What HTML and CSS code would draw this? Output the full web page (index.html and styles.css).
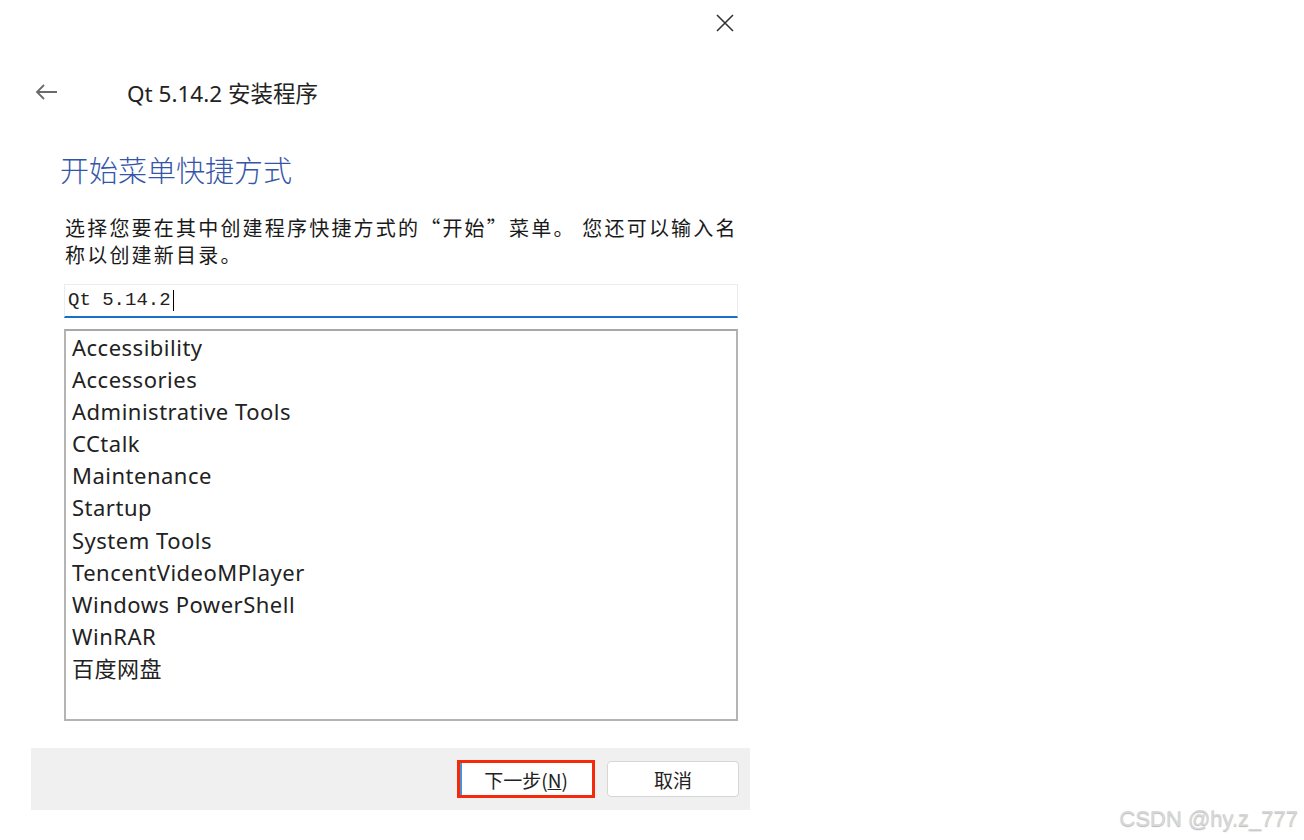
FILE: index.html
```html
<!DOCTYPE html>
<html lang="zh-CN">

<head>
    <meta charset="UTF-8">
    <meta name="viewport" content="width=device-width, initial-scale=1.0">
    <title>Qt 5.14.2 安装程序</title>
    <link rel="stylesheet" href="styles.css">
</head>

<body>
    <div class="window">
        <!-- Title bar with close button -->
        <div class="titlebar">
            <button class="close" title="关闭">
                <svg width="18" height="18" viewBox="0 0 18 18">
                    <path d="M1 1 L17 17 M17 1 L1 17" stroke="#333" stroke-width="1.6" fill="none" />
                </svg>
            </button>
        </div>

        <div class="header">
            <button class="back" title="返回">
                <svg width="24" height="18" viewBox="0 0 24 18">
                    <path d="M23 9 H3 M10 2 L3 9 L10 16" stroke="#6a6a6a" stroke-width="1.8" fill="none" />
                </svg>
            </button>
            <span class="app-title">Qt 5.14.2 安装程序</span>
        </div>

        <div class="content">
            <h1 class="page-title">开始菜单快捷方式</h1>
            <p class="desc">选择您要在其中创建程序快捷方式的“开始”菜单。 您还可以输入名称以创建新目录。</p>

            <div class="folder-input">Qt 5.14.2<span class="caret"></span></div>

            <ul class="folder-list">
                <li>Accessibility</li>
                <li>Accessories</li>
                <li>Administrative Tools</li>
                <li>CCtalk</li>
                <li>Maintenance</li>
                <li>Startup</li>
                <li>System Tools</li>
                <li>TencentVideoMPlayer</li>
                <li>Windows PowerShell</li>
                <li>WinRAR</li>
                <li>百度网盘</li>
            </ul>
        </div>

        <div class="footer">
            <button class="btn btn-next">下一步(<u>N</u>)</button>
            <button class="btn">取消</button>
        </div>
    </div>

    <div class="watermark">CSDN @hy.z_777</div>
</body>

</html>
```

FILE: styles.css
```css
* {
    margin: 0;
    padding: 0;
    box-sizing: border-box;
}

body {
    background: #fff;
    color: #222;
    font-family: 'Noto Sans', 'Noto Sans CJK SC', sans-serif;
    width: 1304px;
    height: 840px;
    position: relative;
    overflow: hidden;
}

.window {
    margin-left: 31px;
    width: 719px;
    background: #fff;
}

.titlebar {
    height: 45px;
    display: flex;
    justify-content: flex-end;
    align-items: flex-start;
}

.close {
    width: 52px;
    height: 45px;
    border: none;
    background: none;
    display: flex;
    align-items: center;
    justify-content: center;
    margin-right: -1px;
}

.header {
    display: flex;
    align-items: center;
    height: 48px;
    margin-top: 23px;
}

.back {
    width: 32px;
    border: none;
    background: none;
    display: flex;
    align-items: center;
    margin-left: 3px;
}

.app-title {
    margin-left: 61px;
    font-size: 22.5px;
    color: #222;
}

.content {
    padding: 0 12px 0 33px;
}

.page-title {
    margin-top: 33px;
    margin-left: -4px;
    font-family: 'Noto Sans CJK SC', serif;
    font-weight: 300;
    font-size: 29px;
    line-height: 40px;
    color: #3556a8;
}

.desc {
    margin-top: 25px;
    margin-left: 1px;
    font-family: 'Noto Sans CJK SC', sans-serif;
    font-size: 20px;
    line-height: 27px;
    letter-spacing: 2.2px;
    color: #1a1a1a;
}

.folder-input {
    margin-top: 16px;
    height: 34px;
    border: 1px solid #ececec;
    border-bottom: 2px solid #1a6fc9;
    font-family: 'Liberation Mono', 'Noto Sans CJK SC', monospace;
    font-size: 19px;
    line-height: 31px;
    padding-left: 3px;
    color: #222;
    display: flex;
    align-items: center;
}

.caret {
    display: inline-block;
    width: 1px;
    height: 21px;
    background: #000;
    margin-left: 2px;
}

.folder-list {
    list-style: none;
    margin-top: 11px;
    height: 392px;
    border: 2px solid #b4b4b4;
    border-top-color: #a8a8a8;
    padding: 0 6px;
}

.folder-list li {
    font-size: 22px;
    letter-spacing: 0.5px;
    line-height: 32.1px;
    color: #222;
}

.footer {
    margin-top: 27px;
    height: 62px;
    background: #f0f0f0;
    display: flex;
    justify-content: flex-end;
    align-items: center;
    gap: 12px;
    padding-right: 11px;
}

.btn {
    width: 132px;
    height: 36px;
    background: #fff;
    border: 1px solid #d6d6d6;
    border-radius: 4px;
    font-family: 'Noto Sans CJK SC', sans-serif;
    font-size: 19px;
    color: #222;
}

.btn u {
    text-decoration: underline;
}

/* highlighted default button */
.btn-next {
    width: 138px;
    height: 38px;
    border: 3px solid #f52a0a;
    border-radius: 0;
    box-shadow: inset 2px 0 0 #4d8ed8;
}

.watermark {
    position: absolute;
    right: 6px;
    bottom: 8px;
    font-family: 'Liberation Sans', Arial, sans-serif;
    font-size: 22px;
    color: #d8d8d8;
    text-shadow: 0 1px 1px #b8b8b8;
}
```
